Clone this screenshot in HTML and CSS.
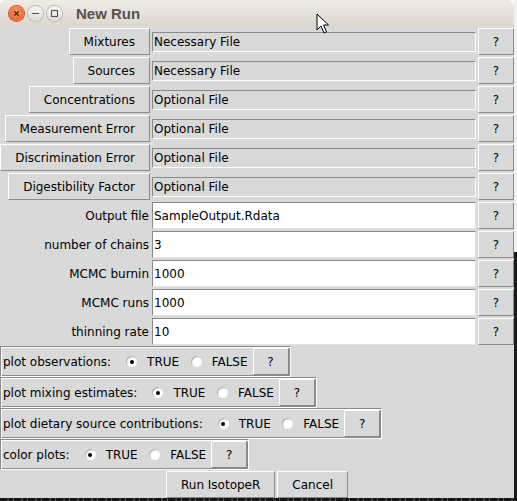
FILE: index.html
```html
<!DOCTYPE html>
<html>
<head>
<meta charset="utf-8">
<title>New Run</title>
<link rel="stylesheet" href="styles.css">
</head>
<body>
<div class="screen">
  <div class="window">
    <div class="titlebar">
      <div class="wbtns">
        <span class="wb close"><svg width="15" height="15" viewBox="0 0 15 15"><path d="M5.2 5.2 L9.8 9.8 M9.8 5.2 L5.2 9.8" stroke="#4a2a1a" stroke-width="1.3"/></svg></span>
        <span class="wb"><svg width="15" height="15" viewBox="0 0 15 15"><path d="M4 7.5 H11" stroke="#555" stroke-width="1.2"/></svg></span>
        <span class="wb"><svg width="15" height="15" viewBox="0 0 15 15"><rect x="4.5" y="4.5" width="6" height="6" fill="none" stroke="#555" stroke-width="1.1"/></svg></span>
      </div>
      <div class="title">New Run</div>
    </div>
    <div class="content">
      <div class="form">
        <div class="btn lbtn">Mixtures</div>
        <div class="entry ro">Necessary File</div>
        <div class="btn q">?</div>

        <div class="btn lbtn">Sources</div>
        <div class="entry ro">Necessary File</div>
        <div class="btn q">?</div>

        <div class="btn lbtn">Concentrations</div>
        <div class="entry ro">Optional File</div>
        <div class="btn q">?</div>

        <div class="btn lbtn">Measurement Error</div>
        <div class="entry ro">Optional File</div>
        <div class="btn q">?</div>

        <div class="btn lbtn">Discrimination Error</div>
        <div class="entry ro">Optional File</div>
        <div class="btn q">?</div>

        <div class="btn lbtn">Digestibility Factor</div>
        <div class="entry ro">Optional File</div>
        <div class="btn q">?</div>

        <div class="lbl">Output file</div>
        <div class="entry rw">SampleOutput.Rdata</div>
        <div class="btn q">?</div>

        <div class="lbl">number of chains</div>
        <div class="entry rw">3</div>
        <div class="btn q">?</div>

        <div class="lbl">MCMC burnin</div>
        <div class="entry rw">1000</div>
        <div class="btn q">?</div>

        <div class="lbl">MCMC runs</div>
        <div class="entry rw">1000</div>
        <div class="btn q">?</div>

        <div class="lbl">thinning rate</div>
        <div class="entry rw">10</div>
        <div class="btn q">?</div>
      </div>

      <div class="opts">
        <div class="frame">
          <span class="flabel">plot observations:</span>
          <span class="rb"><span class="ind on"></span>TRUE</span>
          <span class="rb"><span class="ind"></span>FALSE</span>
          <span class="btn q">?</span>
        </div>
        <div class="frame">
          <span class="flabel">plot mixing estimates:</span>
          <span class="rb"><span class="ind on"></span>TRUE</span>
          <span class="rb"><span class="ind"></span>FALSE</span>
          <span class="btn q">?</span>
        </div>
        <div class="frame">
          <span class="flabel">plot dietary source contributions:</span>
          <span class="rb"><span class="ind on"></span>TRUE</span>
          <span class="rb"><span class="ind"></span>FALSE</span>
          <span class="btn q">?</span>
        </div>
        <div class="frame">
          <span class="flabel">color plots:</span>
          <span class="rb"><span class="ind on"></span>TRUE</span>
          <span class="rb"><span class="ind"></span>FALSE</span>
          <span class="btn q">?</span>
        </div>
      </div>

      <div class="actions">
        <div class="btn abtn">Run IsotopeR</div>
        <div class="btn abtn">Cancel</div>
      </div>
    </div>
  </div>
  <div class="rstrip"><div class="rs-top"></div><div class="rs-bot"></div></div>
</div>
<div class="taskbar"></div>
<svg class="cursor" width="14" height="22" viewBox="0 0 14 22"><path d="M1 1 L1 17 L5 13 L8 20 L10.5 19 L7.5 12 L12.5 12 Z" fill="#fff" stroke="#000" stroke-width="1" stroke-linejoin="round"/></svg>
</body>
</html>
```
FILE: styles.css
```css
html, body {
  margin: 0;
  padding: 0;
}
body {
  width: 517px;
  height: 501px;
  overflow: hidden;
  background: #ffffff;
  font-family: "DejaVu Sans", "Noto Sans", sans-serif;
  font-size: 12px;
  color: #000;
  position: relative;
}
.screen {
  display: flex;
  height: 498px;
}
.window {
  width: 514px;
  background: #d9d9d9;
  display: flex;
  flex-direction: column;
  border-radius: 7px 7px 0 0;
  overflow: hidden;
}
.rstrip {
  flex: 1;
  display: flex;
  flex-direction: column;
}
.rs-top {
  height: 252px;
  background: #f2f1ef;
}
.rs-bot {
  flex: 1;
  background: #1a1a1a;
}
.taskbar {
  height: 3px;
  background: repeating-linear-gradient(90deg, #141414 0 7px, #3c3c3c 7px 9px, #141414 9px 13px, #5a5a5a 13px 14px);
}

/* title bar */
.titlebar {
  height: 27px;
  flex: none;
  display: flex;
  align-items: center;
  background: linear-gradient(#efebe6, #dcd6cf);
}
.wbtns {
  display: flex;
  gap: 4px;
  margin-left: 9px;
}
.wb {
  width: 15px;
  height: 15px;
  border-radius: 50%;
  box-sizing: border-box;
  background: linear-gradient(#f7f6f4, #dedbd7);
  box-shadow: 0 0 0 1px #bdb8b2;
  display: flex;
}
.wb.close {
  background: radial-gradient(circle at 50% 35%, #f8955f, #e6582a);
  box-shadow: 0 0 0 1px #c2562c;
}
.title {
  margin-left: 14px;
  font-family: "Liberation Sans", Arial, sans-serif;
  font-weight: bold;
  font-size: 15px;
  color: #56524d;
}

/* form grid */
.content {
  display: flex;
  flex-direction: column;
}
.form {
  display: grid;
  grid-template-columns: 150px 324px 36px;
  column-gap: 2px;
  grid-auto-rows: 29px;
  align-items: center;
}
.btn {
  box-sizing: border-box;
  height: 27px;
  border: 1px solid;
  border-color: #ffffff #8a8a8a #8a8a8a #ffffff;
  background: #d9d9d9;
  display: flex;
  align-items: center;
  justify-content: center;
  padding: 0 14px;
  white-space: nowrap;
}
.lbtn {
  justify-self: end;
}
.q {
  width: 36px;
  padding: 0;
}
.entry {
  box-sizing: border-box;
  border: 1px solid;
  border-color: #8a8a8a #ffffff #ffffff #8a8a8a;
  padding: 0 1px;
  display: flex;
  align-items: center;
  white-space: nowrap;
}
.ro {
  height: 20px;
  background: #d9d9d9;
}
.rw {
  height: 27px;
  background: #ffffff;
  border-color: #8a8a8a #e4e4e4 #e4e4e4 #8a8a8a;
}
.lbl {
  justify-self: end;
  padding-right: 1px;
}

/* option frames */
.opts {
  display: flex;
  flex-direction: column;
  align-items: flex-start;
}
.frame {
  display: flex;
  align-items: center;
  box-sizing: border-box;
  height: 31px;
  border: 1px solid;
  border-color: #8a8a8a #ffffff #ffffff #8a8a8a;
  box-shadow: inset 1px 1px #ffffff, inset -1px -1px #8a8a8a;
  padding: 1px;
  white-space: nowrap;
}
.flabel {
  padding-left: 1px;
  margin-right: 15px;
}
.rb {
  display: flex;
  align-items: center;
}
.rb + .rb {
  margin-left: 11.5px;
  margin-right: 5px;
}
.ind {
  width: 11px;
  height: 11px;
  border-radius: 50%;
  background: #ffffff;
  box-shadow: inset 1px 1px 1px #a9a9a9;
  margin-right: 10px;
  display: flex;
  align-items: center;
  justify-content: center;
}
.ind.on::after {
  content: "";
  width: 4px;
  height: 4px;
  border-radius: 50%;
  background: #000;
}

/* action buttons */
.actions {
  display: flex;
  justify-content: center;
  gap: 2px;
  margin-top: 1px;
}
.abtn {
  padding: 0 14px;
}

.cursor {
  position: absolute;
  left: 316px;
  top: 13px;
}
```
